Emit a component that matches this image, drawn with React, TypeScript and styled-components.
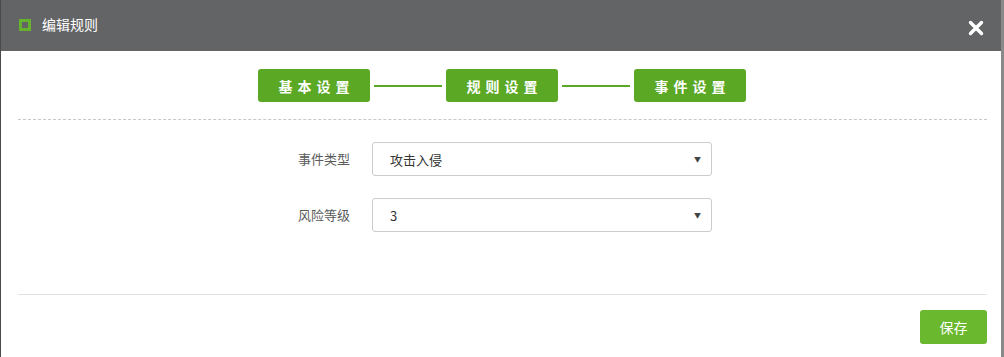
import styled, { createGlobalStyle } from "styled-components";

const GlobalStyle = createGlobalStyle`
  html, body {
    margin: 0;
    padding: 0;
    background: #ffffff;
  }
  body {
    font-family: "Noto Sans CJK SC", "Noto Sans", sans-serif;
  }
`;

const steps = ["基本设置", "规则设置", "事件设置"];

const fields = [
  { label: "事件类型", value: "攻击入侵" },
  { label: "风险等级", value: "3" },
];

const App: React.FC = () => {
  return (
    <>
      <GlobalStyle />
      <Dialog>
        <Header>
          <TitleIcon />
          <Title>编辑规则</Title>
          <CloseButton aria-label="close">
            <svg width="16" height="16" viewBox="0 0 16 16">
              <path
                d="M2.5 2.5 L13.5 13.5 M13.5 2.5 L2.5 13.5"
                stroke="#ffffff"
                strokeWidth="3.4"
                strokeLinecap="round"
              />
            </svg>
          </CloseButton>
        </Header>

        <Body>
          <Steps>
            {steps.map((s, i) => (
              <StepGroup key={s}>
                {i > 0 && <StepLine />}
                <Step>{s}</Step>
              </StepGroup>
            ))}
          </Steps>
          <DashedRule />

          <Form>
            {fields.map((f) => (
              <FormRow key={f.label}>
                <Label>{f.label}</Label>
                <Select>
                  <span>{f.value}</span>
                  <Caret>▼</Caret>
                </Select>
              </FormRow>
            ))}
          </Form>

          <SolidRule />
          <Footer>
            <SaveButton>保存</SaveButton>
          </Footer>
        </Body>
      </Dialog>
    </>
  );
};

export default App;

// 对话框
const Dialog = styled.div`
  width: 1004px;
  height: 357px;
  box-sizing: border-box;
  border-left: 1px solid #4a4a4a;
  border-right: 3px solid #8a8a8a;
  background: #ffffff;
  overflow: hidden;
`;

const Header = styled.div`
  height: 51px;
  background: #636465;
  display: flex;
  align-items: center;
  padding: 0 17px 0 18px;
`;

const TitleIcon = styled.span`
  width: 12px;
  height: 12px;
  box-sizing: border-box;
  border: 3px solid #66b22c;
  margin-right: 11px;
  margin-top: -2px;
`;

const Title = styled.span`
  color: #ffffff;
  font-size: 14px;
  margin-top: -3px;
`;

const CloseButton = styled.span`
  margin-left: auto;
  display: flex;
  margin-top: 4px;
`;

const Body = styled.div`
  padding: 0 15px 0 17px;
`;

const Steps = styled.div`
  display: flex;
  justify-content: center;
  padding-top: 18px;
`;

const StepGroup = styled.div`
  display: flex;
  align-items: center;
`;

const Step = styled.div`
  width: 112px;
  height: 33px;
  box-sizing: border-box;
  background: #5aa824;
  border-radius: 3px;
  color: #ffffff;
  font-size: 14px;
  font-weight: bold;
  letter-spacing: 5px;
  display: flex;
  align-items: center;
  justify-content: center;
  padding-left: 5px;
`;

const StepLine = styled.div`
  width: 68px;
  height: 2px;
  background: #5aa824;
  margin: 0 4px;
`;

const DashedRule = styled.div`
  margin-top: 17px;
  border-top: 1px dashed #c8c8c8;
  width: 969px;
`;

const Form = styled.div`
  display: flex;
  flex-direction: column;
  gap: 22px;
  padding-top: 22px;
  height: 174px;
  box-sizing: border-box;
`;

const FormRow = styled.div`
  display: flex;
  align-items: center;
`;

const Label = styled.div`
  width: 354px;
  text-align: right;
  font-size: 13px;
  color: #5a5a5a;
  padding-right: 22px;
  box-sizing: border-box;
  margin-top: -2px;
`;

const Select = styled.div`
  width: 340px;
  height: 34px;
  box-sizing: border-box;
  border: 1px solid #cccccc;
  border-radius: 3px;
  display: flex;
  align-items: center;
  padding: 0 10px 0 17px;
  font-size: 13px;
  color: #333333;
`;

const Caret = styled.span`
  margin-left: auto;
  font-size: 7px;
  color: #444444;
`;

const SolidRule = styled.div`
  border-top: 1px solid #e3e3e3;
  width: 969px;
`;

const Footer = styled.div`
  display: flex;
  justify-content: flex-end;
  width: 969px;
  padding-top: 15px;
`;

const SaveButton = styled.button`
  width: 67px;
  height: 34px;
  border: none;
  border-radius: 3px;
  background: #6ab82d;
  color: #ffffff;
  font-family: "Noto Sans CJK SC", sans-serif;
  font-size: 14px;
  padding: 0;
`;
